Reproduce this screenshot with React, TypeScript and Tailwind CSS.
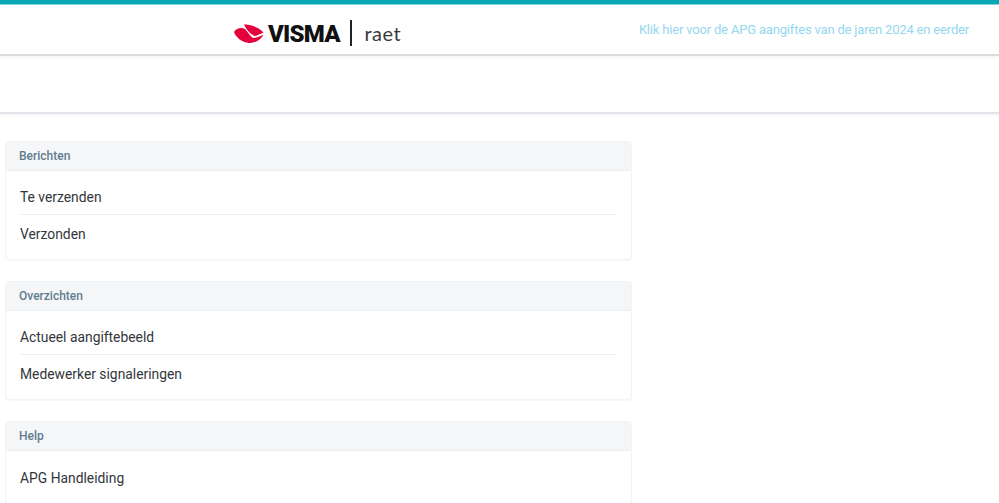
import React from "react";

const sections = [
  { title: "Berichten", items: ["Te verzenden", "Verzonden"] },
  { title: "Overzichten", items: ["Actueel aangiftebeeld", "Medewerker signaleringen"] },
  { title: "Help", items: ["APG Handleiding"] },
];

const Logo = () => (
  <div className="mt-[8px] flex items-center">
    <svg width="30" height="20" viewBox="0 0 30 20" className="mt-[2px] mr-[4px]">
      <path d="M0 8C2 4 8 3 11 5C14 8 16 12 19 14C22 14 26 12.5 29.5 10.5C27 16 20 19.5 15 19C8 18 2 14 0 8Z" fill="#e4003d" />
      <path d="M10 0.5C16 0 24 3 29.5 8.5C26 10 22.5 12 20.5 12C16 10 12 5 10 0.5Z" fill="#e4003d" />
    </svg>
    <span className="mt-px w-[71px] font-['Roboto',sans-serif] text-[24px] leading-none font-black tracking-[-0.8px] text-[#111111]">
      VISMA
    </span>
    <div className="mr-[13px] ml-[11px] h-[26px] w-[1.5px] bg-[#222222]" />
    <span className="font-['Lato',sans-serif] text-[20px] leading-none tracking-[0.5px] text-[#3a3a3a]">raet</span>
  </div>
);

const Card = ({ title, items }: { title: string; items: string[] }) => (
  <div className="rounded-[4px] border border-[#f2f3f5] bg-white shadow-[0_1px_1px_rgba(0,0,0,0.03)]">
    <div className="flex h-[29px] items-center rounded-t-[4px] border-b border-[#e9edf0] bg-[#f5f6f8] px-[13px] text-[12px] font-medium text-[#5f7d8f]">
      {title}
    </div>
    <div className="px-[14px] pt-[8px] pb-[7px]">
      {items.map((item, i) => (
        <div
          key={item}
          className={
            i < items.length - 1
              ? "flex h-[36px] items-center border-b border-[#eeeff1] pt-[2px] text-[13.85px] text-[#33373b]"
              : "flex h-[37px] items-center pt-px text-[13.85px] text-[#33373b]"
          }
        >
          {item}
        </div>
      ))}
    </div>
  </div>
);

const App: React.FC = () => {
  return (
    <div className="h-[503px] w-[999px] overflow-hidden bg-white font-['Roboto',sans-serif]">
      <div className="h-[4px] bg-[#06a8b4] shadow-[0_1px_0_#7fd3d9]" />
      <div className="flex h-[52px] items-center justify-between border-b-2 border-[#dadbdc] pr-[30px] pl-[234px] shadow-[0_2px_2px_#f5f6f6]">
        <Logo />
        <a className="pt-[2px] text-[13px] tracking-[-0.18px] text-[#93d8ef]">Klik hier voor de APG aangiftes van de jaren 2024 en eerder</a>
      </div>
      <div className="h-[58px] border-b-2 border-[#e0e4e9] shadow-[0_2px_2px_#f6f7f8]" />
      <div className="flex w-[632px] flex-col gap-[21px] pt-[27px] pl-[5px]">
        {sections.map((s) => (
          <Card key={s.title} title={s.title} items={s.items} />
        ))}
      </div>
    </div>
  );
};

export default App;
